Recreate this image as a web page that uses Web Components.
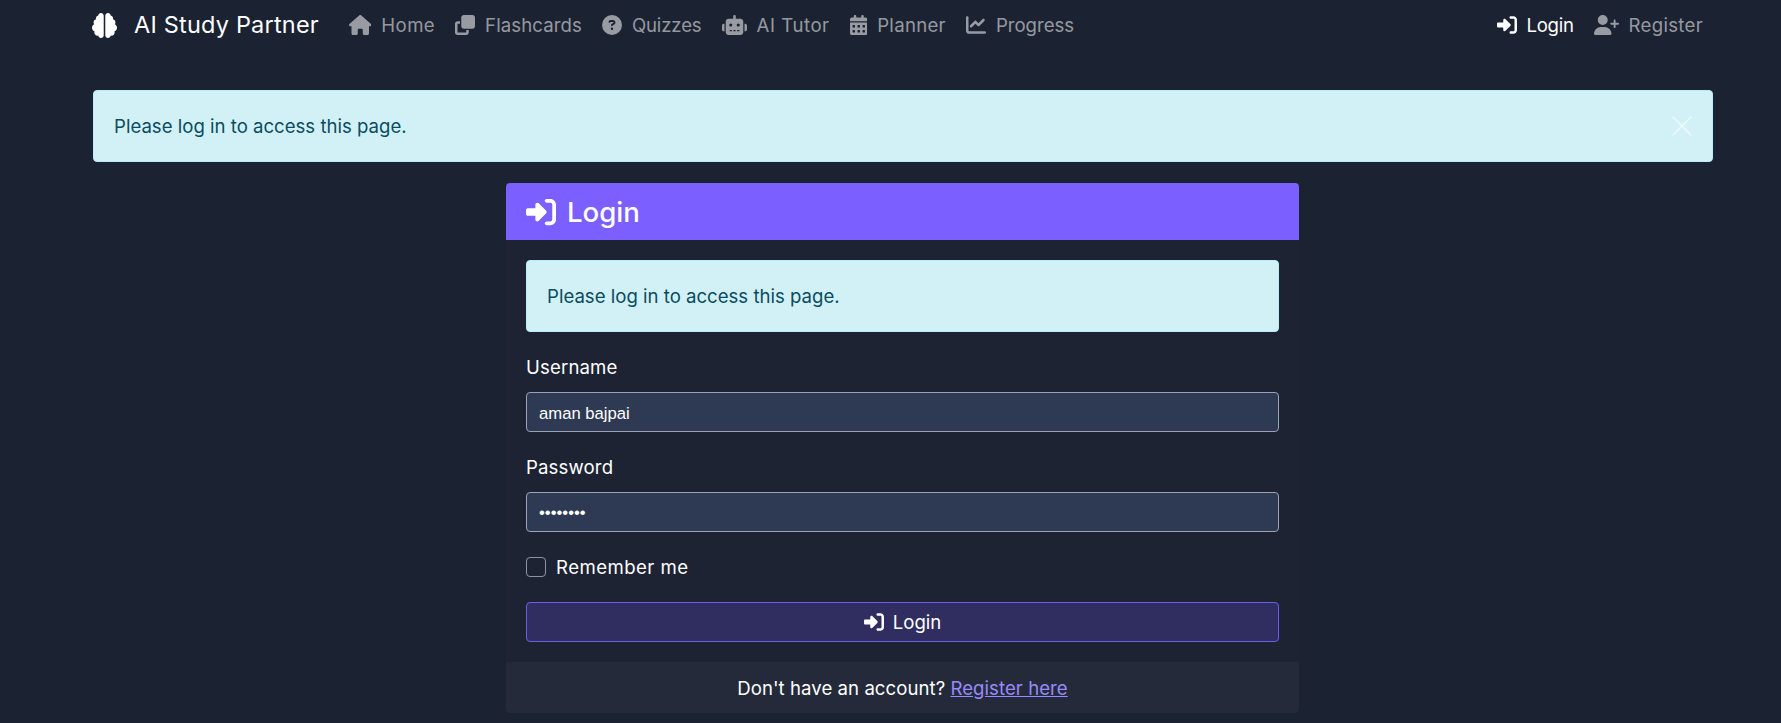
<!DOCTYPE html>
<html lang="en">
<head>
<meta charset="utf-8">
<title>Login - AI Study Partner</title>
<style>
  html, body {
    background-color: #1b2232;
    color: #fff;
    font-family: Inter, "Noto Sans", "Liberation Sans", sans-serif;
    font-size: 18.6px;
    line-height: 30px;
    margin: 0;
  }
</style>
</head>
<body>
<app-navbar>
  <nav-link slot="left" icon="home" style="letter-spacing:.4px">Home</nav-link>
  <nav-link slot="left" icon="clone" style="letter-spacing:.1px">Flashcards</nav-link>
  <nav-link slot="left" icon="question" style="letter-spacing:-.15px">Quizzes</nav-link>
  <nav-link slot="left" icon="robot" style="letter-spacing:.55px">AI Tutor</nav-link>
  <nav-link slot="left" icon="calendar" style="letter-spacing:.3px">Planner</nav-link>
  <nav-link slot="left" icon="chart">Progress</nav-link>
  <nav-link slot="right" icon="signin" active style="letter-spacing:-.3px">Login</nav-link>
  <nav-link slot="right" icon="userplus" style="letter-spacing:.3px">Register</nav-link>
</app-navbar>
<page-main>
  <info-alert dismissible>Please log in to access this page.</info-alert>
  <login-card>
    <info-alert>Please log in to access this page.</info-alert>
    <form-field label="Username" type="text" value="aman bajpai"></form-field>
    <form-field label="Password" type="password" value="password"></form-field>
    <remember-check>Remember me</remember-check>
    <submit-button>Login</submit-button>
  </login-card>
</page-main>

<script>
const ICONS = {
  brain: ['0 0 512 512', 'M184 0c30.9 0 56 25.1 56 56V456c0 30.9-25.1 56-56 56c-28.9 0-52.7-21.9-55.7-50.1c-5.2 1.4-10.7 2.1-16.3 2.1c-35.3 0-64-28.7-64-64c0-7.4 1.3-14.6 3.6-21.2C21.4 367.4 0 338.2 0 304c0-31.9 18.7-59.5 45.8-72.3C37.1 220.8 32 207 32 192c0-30.7 21.6-56.3 50.4-62.6C80.8 123.9 80 118 80 112c0-29.9 20.6-55.1 48.3-62.1C131.3 21.9 155.1 0 184 0zM328 0c28.9 0 52.6 21.9 55.7 49.9c27.8 7 48.3 32.1 48.3 62.1c0 6-.8 11.9-2.4 17.4c28.8 6.2 50.4 31.9 50.4 62.6c0 15-5.1 28.8-13.8 39.7C493.3 244.5 512 272.1 512 304c0 34.2-21.4 63.4-51.6 74.8c2.3 6.6 3.6 13.8 3.6 21.2c0 35.3-28.7 64-64 64c-5.6 0-11.1-.7-16.3-2.1c-3 28.2-26.8 50.1-55.7 50.1c-30.9 0-56-25.1-56-56V56c0-30.9 25.1-56 56-56z'],
  home: ['0 0 576 512', 'M575.8 255.5c0 18-15 32.1-32 32.1h-32l.7 160.2c0 2.7-.2 5.4-.5 8.1V472c0 22.1-17.9 40-40 40H456c-1.1 0-2.2 0-3.3-.1c-1.4 .1-2.8 .1-4.2 .1H416 392c-22.1 0-40-17.9-40-40V448 384c0-17.7-14.3-32-32-32H256c-17.7 0-32 14.3-32 32v64 24c0 22.1-17.9 40-40 40H160 128.1c-1.5 0-3-.1-4.5-.2c-1.2 .1-2.4 .2-3.6 .2H104c-22.1 0-40-17.9-40-40V360c0-.9 0-1.9 .1-2.8V287.6H32c-18 0-32-14-32-32.1c0-9 3-17 10-24L266.4 8c7-7 15-8 22-8s15 2 21 7L564.8 231.5c8 7 12 15 11 24z'],
  clone: ['0 0 512 512', 'M288 448H64V224h64V160H64c-35.3 0-64 28.7-64 64V448c0 35.3 28.7 64 64 64H288c35.3 0 64-28.7 64-64V384H288v64zm-64-96H448c35.3 0 64-28.7 64-64V64c0-35.3-28.7-64-64-64H224c-35.3 0-64 28.7-64 64V288c0 35.3 28.7 64 64 64z'],
  question: ['0 0 512 512', 'M256 512A256 256 0 1 0 256 0a256 256 0 1 0 0 512zM169.8 165.3c7.9-22.3 29.1-37.3 52.8-37.3h58.3c34.9 0 63.1 28.3 63.1 63.1c0 22.6-12.1 43.5-31.7 54.8L280 264.4c-.2 13-10.9 23.6-24 23.6c-13.3 0-24-10.7-24-24V250.5c0-8.6 4.6-16.5 12.1-20.8l44.3-25.4c4.7-2.7 7.6-7.7 7.6-13.1c0-8.4-6.8-15.1-15.1-15.1H222.6c-3.4 0-6.4 2.1-7.5 5.3l-.4 1.2c-4.4 12.5-18.2 19-30.6 14.6s-19-18.2-14.6-30.6l.4-1.2zM224 352a32 32 0 1 1 64 0 32 32 0 1 1 -64 0z'],
  robot: ['0 0 640 512', 'M320 0c17.7 0 32 14.3 32 32V96H472c39.8 0 72 32.2 72 72V440c0 39.8-32.2 72-72 72H168c-39.8 0-72-32.2-72-72V168c0-39.8 32.2-72 72-72H288V32c0-17.7 14.3-32 32-32zM208 384c-8.8 0-16 7.2-16 16s7.2 16 16 16h32c8.8 0 16-7.2 16-16s-7.2-16-16-16H208zm96 0c-8.8 0-16 7.2-16 16s7.2 16 16 16h32c8.8 0 16-7.2 16-16s-7.2-16-16-16H304zm96 0c-8.8 0-16 7.2-16 16s7.2 16 16 16h32c8.8 0 16-7.2 16-16s-7.2-16-16-16H400zM264 256a40 40 0 1 0 -80 0 40 40 0 1 0 80 0zm152 40a40 40 0 1 0 0-80 40 40 0 1 0 0 80zM48 224H64V416H48c-26.5 0-48-21.5-48-48V272c0-26.5 21.5-48 48-48zm544 0c26.5 0 48 21.5 48 48v96c0 26.5-21.5 48-48 48H576V224h16z'],
  calendar: ['0 0 448 512', 'M128 0c17.7 0 32 14.3 32 32V64H288V32c0-17.7 14.3-32 32-32s32 14.3 32 32V64h48c26.5 0 48 21.5 48 48v48H0V112C0 85.5 21.5 64 48 64H96V32c0-17.7 14.3-32 32-32zM0 192H448V464c0 26.5-21.5 48-48 48H48c-26.5 0-48-21.5-48-48V192zm64 80v32c0 8.8 7.2 16 16 16h32c8.8 0 16-7.2 16-16V272c0-8.8-7.2-16-16-16H80c-8.8 0-16 7.2-16 16zm128 0v32c0 8.8 7.2 16 16 16h32c8.8 0 16-7.2 16-16V272c0-8.8-7.2-16-16-16H208c-8.8 0-16 7.2-16 16zm144-16c-8.8 0-16 7.2-16 16v32c0 8.8 7.2 16 16 16h32c8.8 0 16-7.2 16-16V272c0-8.8-7.2-16-16-16H336zM64 400v32c0 8.8 7.2 16 16 16h32c8.8 0 16-7.2 16-16V400c0-8.8-7.2-16-16-16H80c-8.8 0-16 7.2-16 16zm144-16c-8.8 0-16 7.2-16 16v32c0 8.8 7.2 16 16 16h32c8.8 0 16-7.2 16-16V400c0-8.8-7.2-16-16-16H208zm112 16v32c0 8.8 7.2 16 16 16h32c8.8 0 16-7.2 16-16V400c0-8.8-7.2-16-16-16H336c-8.8 0-16 7.2-16 16z'],
  chart: ['0 0 512 512', 'M64 64c0-17.7-14.3-32-32-32S0 46.3 0 64V400c0 44.2 35.8 80 80 80H480c17.7 0 32-14.3 32-32s-14.3-32-32-32H80c-8.8 0-16-7.2-16-16V64zm406.6 86.6c12.5-12.5 12.5-32.8 0-45.3s-32.8-12.5-45.3 0L320 210.7l-57.4-57.4c-12.5-12.5-32.8-12.5-45.3 0l-112 112c-12.5 12.5-12.5 32.8 0 45.3s32.8 12.5 45.3 0L240 221.3l57.4 57.4c12.5 12.5 32.8 12.5 45.3 0l128-128z'],
  signin: ['0 0 512 512', 'M217.9 105.9L340.7 228.7c7.2 7.2 11.3 17.1 11.3 27.3s-4.1 20.1-11.3 27.3L217.9 406.1c-6.4 6.4-15 9.9-24 9.9c-18.7 0-33.9-15.2-33.9-33.9l0-62.1L32 320c-17.7 0-32-14.3-32-32l0-64c0-17.7 14.3-32 32-32l128 0 0-62.1c0-18.7 15.2-33.9 33.9-33.9c9 0 17.6 3.6 24 9.9zM352 416l64 0c17.7 0 32-14.3 32-32l0-256c0-17.7-14.3-32-32-32l-64 0c-17.7 0-32-14.3-32-32s14.3-32 32-32l64 0c53 0 96 43 96 96l0 256c0 53-43 96-96 96l-64 0c-17.7 0-32-14.3-32-32s14.3-32 32-32z'],
  userplus: ['0 0 640 512', 'M96 128a128 128 0 1 1 256 0A128 128 0 1 1 96 128zM0 482.3C0 383.8 79.8 304 178.3 304h91.4C368.2 304 448 383.8 448 482.3c0 16.4-13.3 29.7-29.7 29.7H29.7C13.3 512 0 498.7 0 482.3zM504 312V248H440c-13.3 0-24-10.7-24-24s10.7-24 24-24h64V136c0-13.3 10.7-24 24-24s24 10.7 24 24v64h64c13.3 0 24 10.7 24 24s-10.7 24-24 24H552v64c0 13.3-10.7 24-24 24s-24-10.7-24-24z'],
}

// inline svg for one of the icons above, height is set by the caller
const icon = (name, size) => {
  const [box, d] = ICONS[name]
  const w = box.split(' ')[2] / 512 * size
  return `<svg width="${w}" height="${size}" viewBox="${box}" fill="currentColor" aria-hidden="true"><path d="${d}"></path></svg>`
}

class AppNavbar extends HTMLElement {
  constructor() {
    super()
    this.attachShadow({ mode: 'open' })
    this.shadowRoot.innerHTML = `
      <style>
        :host { display: block; }
        nav {
          align-items: center;
          display: flex;
          height: 50px;
          padding: 0 70px 0 92px;
        }
        .brand {
          align-items: center;
          color: #fff;
          display: flex;
          font-size: 23.5px;
          gap: 17px;
          letter-spacing: 0.2px;
          margin-right: 22px;
        }
        .group { display: flex; gap: 4px; }
        .right { margin-left: auto; }
      </style>
      <nav>
        <div class="brand">${icon('brain', 25)}<span>AI Study Partner</span></div>
        <div class="group"><slot name="left"></slot></div>
        <div class="group right"><slot name="right"></slot></div>
      </nav>
    `
  }
}

class NavLink extends HTMLElement {
  constructor() {
    super()
    this.attachShadow({ mode: 'open' })
    this.shadowRoot.innerHTML = `
      <style>
        :host {
          align-items: center;
          color: rgba(255, 255, 255, 0.55);
          display: flex;
          gap: 10px;
          padding: 0 8px;
        }
        :host([active]) { color: #fff; }
      </style>
      ${icon(this.getAttribute('icon'), 20)}<span><slot></slot></span>
    `
  }
}

class PageMain extends HTMLElement {
  constructor() {
    super()
    this.attachShadow({ mode: 'open' })
    this.shadowRoot.innerHTML = `
      <style>
        :host {
          display: block;
          padding: 40px 68px 0 93px;
        }
        ::slotted(info-alert) { margin-bottom: 21px; }
      </style>
      <slot></slot>
    `
  }
}

class InfoAlert extends HTMLElement {
  constructor() {
    super()
    this.attachShadow({ mode: 'open' })
    const close = this.hasAttribute('dismissible')
      ? `<svg width="20" height="20" viewBox="0 0 16 16" fill="none" stroke="#fff" stroke-width="1.4" opacity="0.6"><path d="M.6.6l14.8 14.8M15.4.6L.6 15.4"></path></svg>`
      : ''
    this.shadowRoot.innerHTML = `
      <style>
        :host { display: block; }
        div {
          align-items: center;
          background-color: #d2f1f7;
          border: 1px solid #b6effb;
          border-radius: 4px;
          color: #0a4c60;
          display: flex;
          justify-content: space-between;
          padding: 20px;
        }
      </style>
      <div><span><slot></slot></span>${close}</div>
    `
  }
}

class LoginCard extends HTMLElement {
  constructor() {
    super()
    this.attachShadow({ mode: 'open' })
    this.shadowRoot.innerHTML = `
      <style>
        :host {
          background-color: #1d2333;
          border-radius: 4px;
          display: block;
          margin-left: 413px;
          overflow: hidden;
          width: 793px;
        }
        header {
          align-items: center;
          background-color: #7b5fff;
          color: #fff;
          display: flex;
          font-size: 27.6px;
          font-weight: 500;
          gap: 11px;
          height: 57px;
          padding: 0 20px;
        }
        main {
          display: flex;
          flex-direction: column;
          gap: 20px;
          padding: 20px;
        }
        footer {
          background-color: #242a39;
          border-radius: 0 0 4px 4px;
          letter-spacing: 0.05px;
          padding: 11px 20px 10px;
          text-align: center;
        }
        a { color: #9a89ff; }
      </style>
      <header>${icon('signin', 30)}<span>Login</span></header>
      <main><slot></slot></main>
      <footer>Don't have an account? <a href="#">Register here</a></footer>
    `
  }
}

class FormField extends HTMLElement {
  constructor() {
    super()
    this.attachShadow({ mode: 'open' })
    this.shadowRoot.innerHTML = `
      <style>
        :host { display: block; }
        label {
          display: block;
          letter-spacing: 0.15px;
          margin-bottom: 10px;
        }
        input {
          background-color: #2e3a53;
          border: 1px solid #9aa3b5;
          border-radius: 4px;
          box-sizing: border-box;
          color: #fff;
          display: block;
          font-family: "Liberation Sans", sans-serif;
          font-size: 16.67px;
          height: 40px;
          outline: none;
          padding: 3px 12px 0;
          width: 100%;
        }
        input[type="password"] { padding-top: 1px; }
      </style>
      <label for="f">${this.getAttribute('label')}</label>
      <input id="f" type="${this.getAttribute('type')}" value="${this.getAttribute('value')}">
    `
  }
}

class RememberCheck extends HTMLElement {
  constructor() {
    super()
    this.attachShadow({ mode: 'open' })
    this.shadowRoot.innerHTML = `
      <style>
        :host {
          align-items: center;
          display: flex;
          gap: 10px;
          letter-spacing: 0.45px;
        }
        i {
          border: 1px solid #8d95a5;
          border-radius: 4px;
          box-sizing: border-box;
          display: block;
          height: 20px;
          width: 20px;
        }
      </style>
      <i></i><span><slot></slot></span>
    `
  }
}

class SubmitButton extends HTMLElement {
  constructor() {
    super()
    this.attachShadow({ mode: 'open' })
    this.shadowRoot.innerHTML = `
      <style>
        :host {
          align-items: center;
          background-color: #302e60;
          border: 1px solid #6c5ce7;
          border-radius: 4px;
          box-sizing: border-box;
          color: #fff;
          display: flex;
          gap: 9px;
          height: 40px;
          justify-content: center;
        }
      </style>
      ${icon('signin', 20)}<span><slot></slot></span>
    `
  }
}

customElements.define('app-navbar', AppNavbar)
customElements.define('nav-link', NavLink)
customElements.define('page-main', PageMain)
customElements.define('info-alert', InfoAlert)
customElements.define('login-card', LoginCard)
customElements.define('form-field', FormField)
customElements.define('remember-check', RememberCheck)
customElements.define('submit-button', SubmitButton)
</script>
</body>
</html>
